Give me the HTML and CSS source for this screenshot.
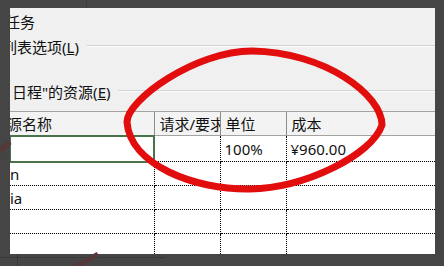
FILE: index.html
```html
<!DOCTYPE html>
<html lang="zh-CN">
<head>
    <meta charset="UTF-8">
    <meta name="viewport" content="width=device-width, initial-scale=1.0">
    <title>分配资源</title>
    <link rel="stylesheet" href="styles.css">
</head>
<body>
    <div class="panel">
        <div class="options">
            <div class="line first"><span class="cut-task">任务</span></div>
            <div class="line second">
                <span class="cut-list">列表选项(<u>L</u>)</span>
                <div class="rule"></div>
            </div>
            <div class="line third">
                <span class="res-label">日程"的资源(<u>E</u>)</span>
                <div class="rule"></div>
            </div>
        </div>

        <table class="grid">
            <colgroup>
                <col class="c-name">
                <col class="c-req">
                <col class="c-unit">
                <col class="c-cost">
            </colgroup>
            <thead>
                <tr>
                    <th class="name-head"><span class="cut-name">源名称</span></th>
                    <th>请求/要求</th>
                    <th>单位</th>
                    <th>成本</th>
                </tr>
            </thead>
            <tbody>
                <tr class="row-first">
                    <td class="selected"></td>
                    <td></td>
                    <td>100%</td>
                    <td>¥960.00</td>
                </tr>
                <tr>
                    <td class="name">n</td>
                    <td></td>
                    <td></td>
                    <td></td>
                </tr>
                <tr>
                    <td class="name">ia</td>
                    <td></td>
                    <td></td>
                    <td></td>
                </tr>
                <tr>
                    <td></td>
                    <td></td>
                    <td></td>
                    <td></td>
                </tr>
                <tr>
                    <td></td>
                    <td></td>
                    <td></td>
                    <td></td>
                </tr>
            </tbody>
        </table>
    </div>

    <!-- red marker circle drawn over the screenshot, plus faint ghosting on the dark frame -->
    <svg class="marks" width="444" height="266" viewBox="0 0 444 266">
        <line x1="86.5" y1="0" x2="86.5" y2="8" stroke="#353535" stroke-width="1" stroke-dasharray="1 1"/>
        <line x1="0" y1="257.5" x2="166" y2="257.5" stroke="#2c2c2c" stroke-width="1" stroke-dasharray="1 1"/>
        <line x1="17.5" y1="254" x2="17.5" y2="266" stroke="#2c2c2c" stroke-width="1" stroke-dasharray="1 1"/>
        <path d="M0,151 Q5,146 10,142" fill="none" stroke="#553838" stroke-width="5"/>
        <path d="M74,267 Q86,262 98,254" fill="none" stroke="#553838" stroke-width="5"/>
        <path class="ring" d="M127,122 C130,165 195,190 250,189 C305,188 372,155 382,125 C382,95 325,52 252,51 C195,51 127,100 127,122 Z"/>
    </svg>
</body>
</html>
```

FILE: styles.css
```css
body {
    margin: 0;
    padding: 8px 9px 12px 10px;
    width: 444px;
    height: 266px;
    box-sizing: border-box;
    background-color: #454545;
    position: relative;
    overflow: hidden;
    font-family: "Noto Sans", "Noto Sans CJK SC", sans-serif;
    font-size: 15px;
    color: #111;
}
.panel {
    width: 425px;
    height: 246px;
    background-color: #f0f0f0;
    overflow: hidden;
}
.options {
    height: 103px;
    padding-top: 4px;
    box-sizing: border-box;
}
.line {
    display: flex;
    align-items: center;
    height: 20px;
    line-height: 20px;
    white-space: nowrap;
}
.second {
    margin-top: 5px;
}
.third {
    margin-top: 25px;
}
.cut-task {
    margin-left: -5px;
}
.cut-list {
    margin-left: -8px;
}
.res-label {
    margin-left: 2px;
}
.rule {
    flex: 1;
    height: 0;
    margin: -3px 0 0 8px;
    border-top: 1px solid #d3d3d3;
    border-bottom: 1px solid #fbfbfb;
}
.grid {
    width: 425px;
    table-layout: fixed;
    border-collapse: collapse;
}
.c-name { width: 144px; }
.c-req { width: 66px; }
.c-unit { width: 66px; }
.c-cost { width: 149px; }
th {
    height: 23px;
    padding: 0 0 0 5px;
    font-weight: normal;
    text-align: left;
    white-space: nowrap;
    overflow: hidden;
    background-color: #f3f3f3;
    border-top: 1px solid #a3a3a3;
    border-bottom: 1px solid #a3a3a3;
    border-left: 1px solid #8c8c8c;
}
th.name-head {
    border-left: none;
    padding-left: 0;
}
.cut-name {
    margin-left: -3px;
}
td {
    height: 23px;
    padding: 0 0 0 4px;
    background-color: #fff;
    white-space: nowrap;
    overflow: hidden;
    border-bottom: 1px dotted #000;
    border-right: 1px dotted #000;
}
td:last-child {
    border-right: none;
}
.row-first td {
    height: 25px;
}
td.selected {
    outline: 2px solid #4a734b;
    outline-offset: -1px;
}
td.name {
    padding-left: 0;
}
.marks {
    position: absolute;
    top: 0;
    left: 0;
    pointer-events: none;
}
.ring {
    fill: none;
    stroke: #e20d0d;
    stroke-width: 7;
}
```
